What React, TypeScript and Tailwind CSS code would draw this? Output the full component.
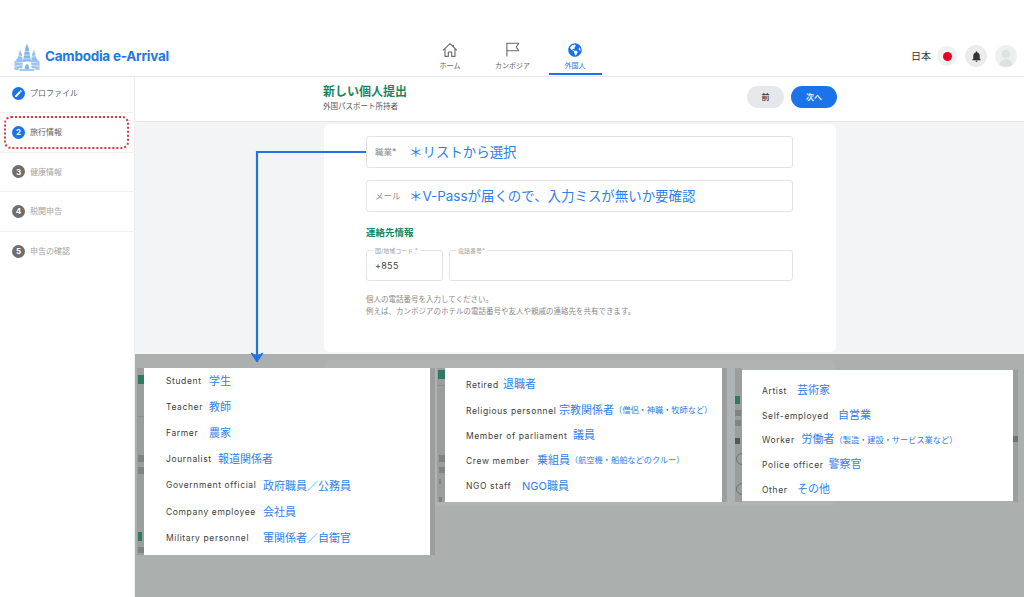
import { MdEdit, MdNotifications } from "react-icons/md";
import { FaGlobeAmericas } from "react-icons/fa";

const font = "[font-family:Inter,'Noto_Sans_CJK_JP',sans-serif]";

function Logo() {
  return (
    <svg width="26" height="30" viewBox="0 0 28 30" className="shrink-0">
      <g fill="#84b6ea">
        <path d="M14 0.5 L16 6 L17 12 L18.5 20 L9.5 20 L11 12 L12 6 Z" />
        <path d="M6.5 7 L8.5 12 L9.5 19 L9 27 L3 27 L3.5 18 Z" opacity="0.85" />
        <path d="M21.5 7 L19.5 12 L18.5 19 L19 27 L25 27 L24.5 18 Z" opacity="0.85" />
        <path d="M0.5 20 L4 16 L5 29 L0.5 29 Z" opacity="0.75" />
        <path d="M27.5 20 L24 16 L23 29 L27.5 29 Z" opacity="0.75" />
        <path d="M6 28 L22 28 L22 30 L6 30 Z" opacity="0.8" />
      </g>
      <g stroke="#ffffff" strokeWidth="0.6" fill="none">
        <path d="M10.5 9 H17.5 M10 13 H18 M9.5 17 H18.5 M4 13 L9 15 M24 13 L19 15 M3 21 H9 M19 21 H25 M3 24 H9 M19 24 H25 M1 25 H5 M23 25 H27" />
      </g>
      <path d="M9.5 28 C9.5 23 11.5 19.5 14 19.5 C16.5 19.5 18.5 23 18.5 28 Z" fill="#ffffff" />
      <path d="M11.5 28 C11.5 25 12.7 22.5 14 22.5 C15.3 22.5 16.5 25 16.5 28 Z" fill="#84b6ea" />
    </svg>
  );
}

function NavItem({ icon, label, active }: { icon: React.ReactNode; label: string; active?: boolean }) {
  return (
    <div className={`flex w-[53px] flex-col items-center pt-[1px] ${active ? "border-b-2 border-[#1a73e8]" : ""}`}>
      <div className="flex h-[17px] items-center justify-center">{icon}</div>
      <span className={`mt-[2.5px] whitespace-nowrap text-[7px] leading-[10px] ${active ? "text-[#1a73e8]" : "text-[#5f6368]"}`}>{label}</span>
    </div>
  );
}

function Step({ mark, label, on, cls }: { mark: React.ReactNode; label: string; on?: boolean; cls: string }) {
  return (
    <div className={`flex items-center gap-[5px] pl-[12px] ${cls}`}>
      <span className={`flex h-[13px] w-[13px] items-center justify-center rounded-full text-[8px] font-bold text-white ${on ? "bg-[#1a73e8]" : "bg-[#6e6e6e]"}`}>{mark}</span>
      <span className={`text-[8px] ${on ? "text-[#5c5c5c]" : "text-[#a4a4a4]"}`}>{label}</span>
    </div>
  );
}

function Occ({ en, w, jp, note, cls, jc }: { en: string; w: string; jp: string; note?: string; cls: string; jc?: string }) {
  return (
    <div className={`flex items-center ${cls}`}>
      <span className={`${w} shrink-0 whitespace-nowrap text-[8.5px] font-normal tracking-[0.62px] text-[#404040]`}>{en}</span>
      <span className={`whitespace-nowrap text-[11px] text-[#2f80ed] ${jc ?? ""}`}>{jp}</span>
      {note && <span className={`whitespace-nowrap text-[8.2px] text-[#2f80ed] ${jc ?? ""}`}>{note}</span>}
    </div>
  );
}

function Field({ label, note }: { label: string; note: string }) {
  return (
    <div className="flex h-[32px] items-center rounded-[3px] border border-[#e3e3e3] bg-white pl-[8px]">
      <span className="w-[34px] shrink-0 text-[8.5px] text-[#8a8a8a]">{label}</span>
      <span className="whitespace-nowrap text-[13.45px] text-[#2f80ed]">{note}</span>
    </div>
  );
}

function Outlined({ label, cls, value }: { label: string; cls: string; value?: string }) {
  return (
    <div className={`relative h-[31px] rounded-[3px] border border-[#e3e3e3] ${cls}`}>
      <span className="absolute left-[6px] top-[-5px] whitespace-nowrap bg-white px-[2px] text-[6px] leading-[9px] text-[#a0a0a0]">{label}</span>
      {value && <span className="absolute left-[8px] top-[8px] text-[9px] tracking-[0.3px] text-[#444]">{value}</span>}
    </div>
  );
}

function Strip({ cls, children }: { cls: string; children?: React.ReactNode }) {
  return <div className={`absolute overflow-hidden bg-[#9b9e9d] ${cls}`}>{children}</div>;
}

function Smudge({ cls }: { cls: string }) {
  return <span className={`absolute ${cls}`} />;
}

export default function App() {
  return (
    <div className={`relative flex h-[597px] w-[1024px] flex-col overflow-hidden bg-white ${font}`}>
      <header className="flex h-[77px] shrink-0 items-stretch border-b border-[#e6e6e6] bg-white pb-[1px] pt-[40px]">
        <div className="flex w-[324px] items-center pb-[2px] pl-[14px]">
          <Logo />
          <span className="ml-[5px] text-[13.5px] font-bold tracking-[-0.25px] text-[#2277e6]">Cambodia e-Arrival</span>
        </div>
        <nav className="ml-[99.5px] flex gap-[9.5px]">
          <NavItem
            label="ホーム"
            icon={
              <svg width="16" height="16" viewBox="0 0 24 24" fill="none" stroke="#6b6b6b" strokeWidth="1.7" strokeLinejoin="round">
                <path d="M1.5 12.5 L12 2.5 L22.5 12.5 M4.5 10 V21.5 H9.5 V15 H14.5 V21.5 H19.5 V10 M17 4 V7.5" />
              </svg>
            }
          />
          <NavItem
            label="カンボジア"
            icon={
              <svg width="15" height="15" viewBox="0 0 24 24" fill="none" stroke="#6b6b6b" strokeWidth="1.8" strokeLinejoin="round">
                <path d="M3 23 V2 H22 L18 8 L22 14 H3" />
              </svg>
            }
          />
          <NavItem active label="外国人" icon={<FaGlobeAmericas size={14} color="#1a73e8" />} />
        </nav>
        <div className="ml-auto flex items-center gap-[6px] pb-[3px] pr-[7px]">
          <span className="text-[10px] text-[#333]">日本</span>
          <span className="flex h-[20px] w-[20px] items-center justify-center rounded-full bg-[#f0f0f0]">
            <span className="h-[9px] w-[9px] rounded-full bg-[#e60023]" />
          </span>
          <span className="ml-[2px] flex h-[22px] w-[22px] items-center justify-center rounded-full bg-[#ececec]">
            <MdNotifications size={13} color="#333" />
          </span>
          <span className="ml-[2px] flex h-[22px] w-[22px] flex-col items-center justify-end overflow-hidden rounded-full bg-[#eef0f0]">
            <span className="h-[8px] w-[8px] rounded-full bg-[#dde1e1]" />
            <span className="mt-[1px] h-[8px] w-[14px] rounded-t-full bg-[#dde1e1]" />
          </span>
        </div>
      </header>

      <div className="flex min-h-0 flex-1">
        <aside className="w-[135px] shrink-0 border-r border-[#eeeeee] bg-white">
          <Step cls="h-[36px] border-b border-[#f0f0f0] pb-[3px]" mark={<MdEdit size={9} />} label="プロファイル" on />
          <Step cls="h-[39.5px] border-b border-[#f0f0f0]" mark="2" label="旅行情報" on />
          <Step cls="h-[39.5px] border-b border-[#f0f0f0]" mark="3" label="健康情報" />
          <Step cls="h-[39.5px] border-b border-[#f0f0f0]" mark="4" label="税関申告" />
          <Step cls="h-[39.5px]" mark="5" label="申告の確認" />
        </aside>

        <main className="flex min-w-0 flex-1 flex-col bg-[#f3f4f6]">
          <div className="flex h-[45px] shrink-0 items-start border-b border-[#e4e4e4] bg-white pl-[188px]">
            <div className="w-[424px] pt-[7.5px]">
              <div className="text-[12px] font-bold leading-[14px] text-[#16875f]">新しい個人提出</div>
              <div className="mt-[3px] text-[7.5px] leading-[10px] text-[#555]">外国パスポート所持者</div>
            </div>
            <div className="flex gap-[7px] pt-[9px]">
              <span className="flex h-[22px] w-[37px] items-center justify-center rounded-full bg-[#e5e7eb] text-[8px] font-medium text-[#333]">前</span>
              <span className="flex h-[22px] w-[46px] items-center justify-center rounded-full bg-[#1a73e8] text-[8px] font-medium text-white">次へ</span>
            </div>
          </div>

          <div className="ml-[189px] mt-[2px] h-[228px] w-[512px] shrink-0 rounded-[6px] bg-white pl-[42px] pr-[43px] pt-[12px]">
            <div className="flex flex-col gap-[12px]">
              <Field label="職業*" note="＊リストから選択" />
              <Field label="メール" note="＊V-Passが届くので、入力ミスが無いか要確認" />
            </div>
            <div className="mt-[14px] text-[9.5px] font-bold leading-[13px] text-[#16875f]">連絡先情報</div>
            <div className="mt-[11px] flex gap-[6px]">
              <Outlined label="国/地域コード *" cls="w-[77px]" value="+855" />
              <Outlined label="電話番号*" cls="flex-1" />
            </div>
            <div className="mt-[13px] text-[7.5px] leading-[11.5px] text-[#8a8a8a]">
              個人の電話番号を入力してください。
              <br />
              例えば、カンボジアのホテルの電話番号や友人や親戚の連絡先を共有できます。
            </div>
          </div>
        </main>
      </div>

      {/* dimmed area with the edges of the screens behind the lists */}
      <div className="absolute bottom-0 left-[135px] right-0 top-[354px] bg-[#abafae]">
        <div className="absolute left-[189px] top-[6px] h-[146px] w-[512px] rounded-[6px] bg-[#b0b3b3]" />
        <Strip cls="left-[2px] top-[14px] h-[187px] w-[7px]">
          <Smudge cls="left-[1px] top-[7px] h-[9px] w-[6px] bg-[#2f7a62]" />
          <Smudge cls="left-[1px] top-[164px] h-[9px] w-[4px] bg-[#2f7a62]" />
          <Smudge cls="left-[1px] top-[87px] h-[7px] w-[6px] bg-[#808382]" />
          <Smudge cls="left-[1px] top-[99px] h-[7px] w-[6px] bg-[#808382]" />
          <Smudge cls="left-[1px] top-[179px] h-[6px] w-[6px] bg-[#808382]" />
          <Smudge cls="left-0 top-[48px] h-px w-[7px] bg-[#8d908f]" />
        </Strip>
        <Strip cls="left-[295px] top-[14px] h-[187px] w-[5px]" />
        <Strip cls="left-[302px] top-[14px] h-[134px] w-[8px]">
          <Smudge cls="left-[1px] top-[2px] h-[9px] w-[7px] bg-[#2f7a62]" />
          <Smudge cls="left-[2px] top-[87px] h-[7px] w-[6px] bg-[#808382]" />
          <Smudge cls="left-[2px] top-[99px] h-[6px] w-[6px] bg-[#808382]" />
          <Smudge cls="left-[2px] top-[111px] h-[5px] w-[2px] bg-[#808382]" />
          <Smudge cls="left-[2px] top-[129px] h-[5px] w-[3px] bg-[#808382]" />
          <Smudge cls="left-0 top-[17px] h-px w-[8px] bg-[#8d908f]" />
        </Strip>
        <Strip cls="left-[587px] top-[14px] h-[134px] w-[5px]" />
        <Strip cls="left-[600px] top-[14px] h-[134px] w-[7px]">
          <Smudge cls="left-0 top-[28px] h-[8px] w-[5px] bg-[#2f7a62]" />
          <Smudge cls="left-0 top-[42px] h-[6px] w-[6px] bg-[#808382]" />
          <Smudge cls="left-0 top-[52px] h-[6px] w-[6px] bg-[#808382]" />
          <Smudge cls="left-0 top-[70px] h-[6px] w-[5px] bg-[#555857]" />
          <Smudge cls="left-[1px] top-[85px] h-[12px] w-[12px] rounded-full border border-[#6f7271]" />
          <Smudge cls="left-[1px] top-[115px] h-[12px] w-[12px] rounded-full border border-[#6f7271]" />
        </Strip>
        <Strip cls="left-[878px] top-[16px] h-[132px] w-[5px]">
          <Smudge cls="left-0 top-[66px] h-[6px] w-[5px] bg-[#6f7271]" />
        </Strip>
      </div>

      {/* annotation arrow */}
      <svg className="absolute left-[250px] top-[148px]" width="120" height="218" viewBox="0 0 120 218">
        <path d="M116 4 H7 V208" fill="none" stroke="#1f73e6" strokeWidth="2.2" />
        <path d="M1 205 L7 214 L13 205 L7 208 Z" fill="#1f73e6" stroke="#1f73e6" strokeWidth="1" strokeLinejoin="round" />
      </svg>

      {/* highlight on active step */}
      <div className="absolute left-[4px] top-[116px] h-[33px] w-[125px] rounded-[7px] border-2 border-dotted border-[#d23a45]" />

      {/* occupation lists */}
      <div className="absolute left-[144px] top-[368px] h-[187px] w-[286px] bg-white pl-[22px]">
        <Occ cls="h-[26.2px]" en="Student" w="w-[43px]" jp="学生" />
        <Occ cls="h-[26.2px]" en="Teacher" w="w-[43px]" jp="教師" />
        <Occ cls="h-[26.2px]" en="Farmer" w="w-[43px]" jp="農家" />
        <Occ cls="h-[26.2px]" en="Journalist" w="w-[52px]" jp="報道関係者" />
        <Occ cls="h-[26.2px]" en="Government official" w="w-[97px]" jp="政府職員／公務員" />
        <Occ cls="h-[26.2px]" en="Company employee" w="w-[97px]" jp="会社員" />
        <Occ cls="h-[26.2px]" en="Military personnel" w="w-[97px]" jp="軍関係者／自衛官" />
      </div>

      <div className="absolute left-[445px] top-[368px] h-[134px] w-[277px] bg-white pl-[21px] pt-[5px]">
        <Occ cls="h-[25.3px]" en="Retired" w="w-[37px]" jc="-translate-y-[1.5px]" jp="退職者" />
        <Occ cls="h-[25.3px]" en="Religious personnel" w="w-[93px]" jc="-translate-y-[1.5px]" jp="宗教関係者" note="（僧侶・神職・牧師など）" />
        <Occ cls="h-[25.3px]" en="Member of parliament" w="w-[107px]" jc="-translate-y-[1.5px]" jp="議員" />
        <Occ cls="h-[25.3px]" en="Crew member" w="w-[71px]" jc="-translate-y-[1.5px]" jp="乗組員" note="（航空機・船舶などのクルー）" />
        <Occ cls="h-[25.3px]" en="NGO staff" w="w-[56px]" jc="-translate-y-[1.5px]" jp="NGO職員" />
      </div>

      <div className="absolute left-[742px] top-[370px] h-[131px] w-[271px] bg-white pl-[20px] pt-[9px]">
        <Occ cls="h-[24.7px]" en="Artist" w="w-[35px]" jc="-translate-y-[1.5px]" jp="芸術家" />
        <Occ cls="h-[24.7px]" en="Self-employed" w="w-[76px]" jc="-translate-y-[1.5px]" jp="自営業" />
        <Occ cls="h-[24.7px]" en="Worker" w="w-[39.5px]" jc="-translate-y-[1.5px]" jp="労働者" note="（製造・建設・サービス業など）" />
        <Occ cls="h-[24.7px]" en="Police officer" w="w-[66.5px]" jc="-translate-y-[1.5px]" jp="警察官" />
        <Occ cls="h-[24.7px]" en="Other" w="w-[35px]" jc="-translate-y-[1.5px]" jp="その他" />
      </div>
    </div>
  );
}
